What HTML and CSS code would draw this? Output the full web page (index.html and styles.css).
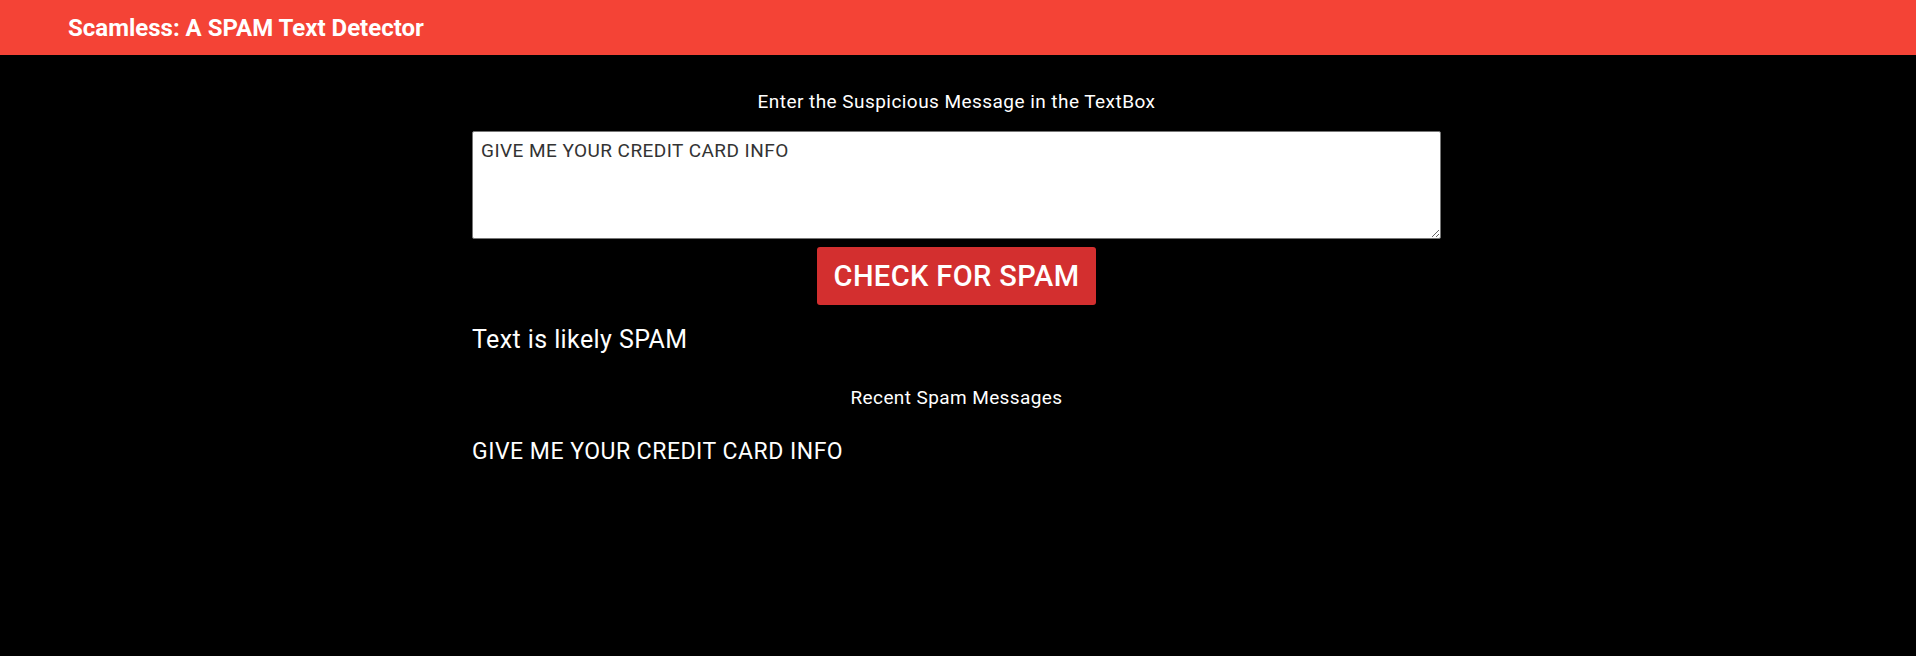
FILE: index.html
```html
<!DOCTYPE html>
<html lang="en">
<head>
    <meta charset="UTF-8">
    <meta name="viewport" content="width=device-width, initial-scale=1.0">
    <title>Scamless</title>
    <link rel="stylesheet" href="styles.css">
</head>
<body>
    <!-- Barra superior -->
    <nav class="topbar">
        <span class="brand">Scamless: A SPAM Text Detector</span>
    </nav>

    <div class="container">
        <p class="prompt">Enter the Suspicious Message in the TextBox</p>
        <textarea class="message-box" id="message">GIVE ME YOUR CREDIT CARD INFO</textarea>
        <div class="actions">
            <button class="btn-check" type="button">CHECK FOR SPAM</button>
        </div>
        <p class="result">Text is likely SPAM</p>

        <!-- Historial -->
        <p class="recent-title">Recent Spam Messages</p>
        <ul class="recent-list">
            <li>GIVE ME YOUR CREDIT CARD INFO</li>
        </ul>
    </div>
</body>
</html>
```

FILE: styles.css
```css
body {
    margin: 0;
    background: #000;
    color: #fff;
    font-family: Roboto, "Noto Sans", sans-serif;
}

.topbar {
    height: 55px;
    background: #f44336;
    display: flex;
    align-items: center;
    padding-left: 68px;
}

.brand {
    font-size: 24px;
    font-weight: 700;
    color: #fff;
}

.container {
    width: 969px;
    margin: 0 0 0 472px;
}

.prompt {
    margin: 36px 0 0;
    font-size: 19px;
    letter-spacing: 0.45px;
    line-height: 21px;
    text-align: center;
}

.message-box {
    display: block;
    box-sizing: border-box;
    width: 100%;
    height: 108px;
    margin-top: 19px;
    padding: 8px;
    border: 1px solid #767676;
    border-radius: 2px;
    font-family: Roboto, sans-serif;
    font-size: 19px;
    letter-spacing: 0.45px;
    line-height: 21px;
    color: #333;
    background: #fff;
    resize: vertical;
}

.actions {
    display: flex;
    justify-content: center;
    margin-top: 8px;
}

.btn-check {
    height: 58px;
    padding: 0 17px;
    border: none;
    border-radius: 3px;
    background: #d32f2f;
    color: #fff;
    font-family: Roboto, sans-serif;
    font-size: 29px;
    letter-spacing: 0.4px;
    font-weight: 500;
    cursor: pointer;
}

.result {
    margin: 21px 0 0;
    font-size: 25px;
    letter-spacing: 0.4px;
    line-height: 28px;
}

.recent-title {
    margin: 33px 0 0;
    font-size: 19px;
    letter-spacing: 0.4px;
    line-height: 21px;
    text-align: center;
}

.recent-list {
    list-style: none;
    margin: 31px 0 0;
    padding: 0;
    font-size: 23px;
    letter-spacing: 0.5px;
    line-height: 26px;
}
```
